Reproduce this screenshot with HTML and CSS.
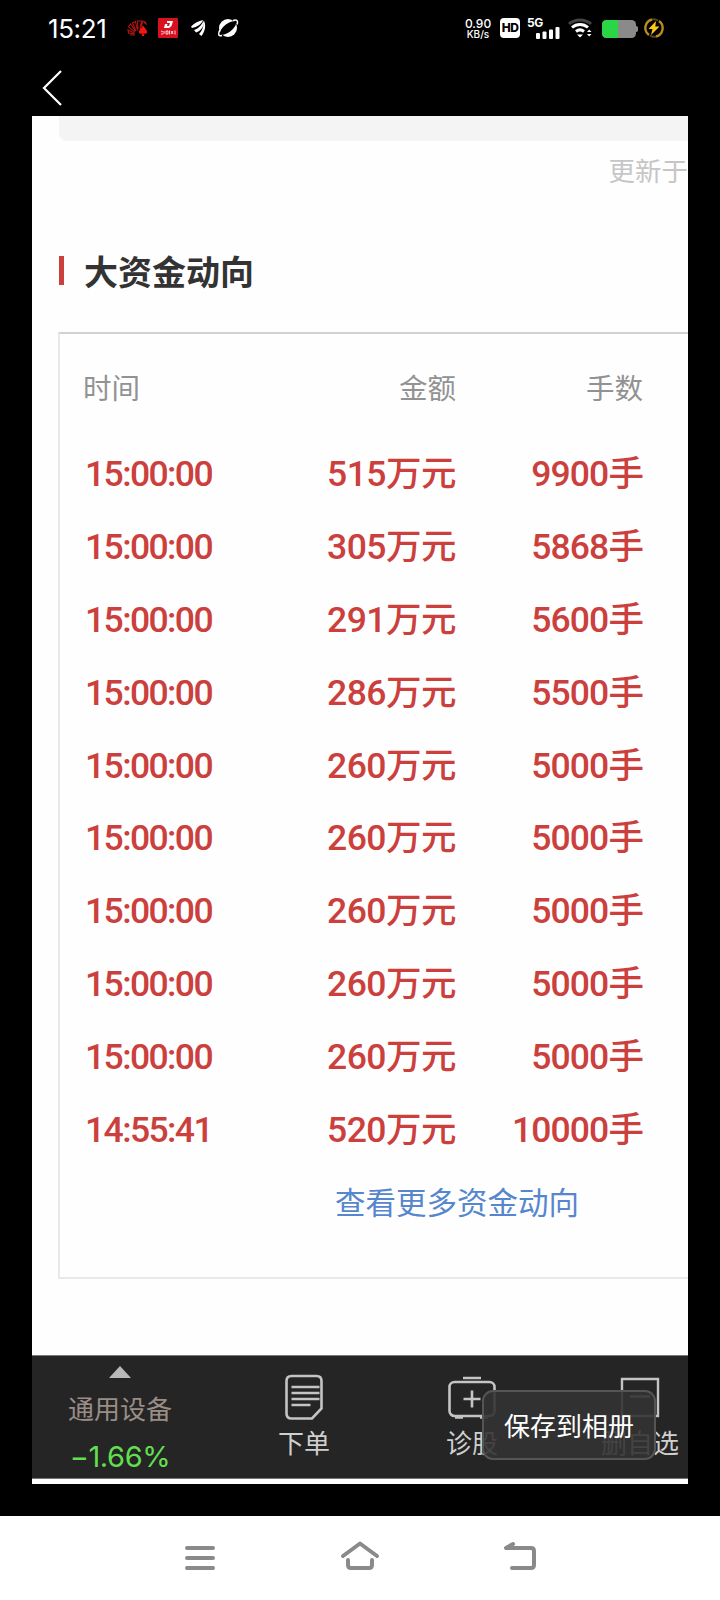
FILE: index.html
```html
<!DOCTYPE html>
<html lang="zh-CN">
  <head>
    <meta charset="UTF-8" />
    <meta name="viewport" content="width=device-width, initial-scale=1.0" />
    <title>大资金动向</title>
    <link rel="stylesheet" href="styles.css" />
  </head>
  <body>
    <div class="screen">
      <!-- 状态栏 -->
      <div class="status-bar">
        <div class="status-left">
          <span class="clock">15:21</span>
          <svg class="app-icons" width="112" height="22" viewBox="0 0 112 22">
            <g fill="none" stroke="#b0160e" stroke-width="1.1">
              <path d="M8 17L1.500 16l-.5-3 6 3M8 15L1.500 10l2-3 5 7M9 14L5.500 6l3-1.500 2 9M11 12l-.5-8h4l-1.500 8M14 10l2-6 3 1.500M17 5.500l3 2" />
              <path d="M3 18h5" />
            </g>
            <path d="M16 8c.5 2.500 4 4 4 7 0 2-2.500 2.500-3.500 1l.8 3h-2.600l.8-3c-1 1.500-3.500 1-3.500-1 0-3 3.500-4.500 4-7z" fill="#f01810" />
            <rect x="31" y="1" width="20" height="20" rx="1" fill="#d9101f" />
            <path d="M40 4h6l-1.500 5L42 11h-5l1-4h2.500l-.5 2h2l1-3h-3z" fill="#fff" />
            <path d="M34 14l2 1M34 17h2M37 14v3M39 14h2v3h-2zM42.500 13.500v4M44 14l2 3M46 14l-2 3M48 13.500v4" stroke="#fff" stroke-width=".8" fill="none" />
            <path d="M64 9.500C67 6 72 4 76 3c-1 4-6 7-11 8zM67 13c4-1 8-5 9.500-9.500C78 8 74 14 69 15.500zM72 17c3-3 5-8 5-13 2 4 1.500 10-2.500 15z" fill="#fff" />
            <circle cx="101" cy="11" r="9" fill="#fff" />
            <ellipse cx="101" cy="11" rx="9.800" ry="4" fill="#000" transform="rotate(-38 101 11)" />
            <path d="M93 13c-2.500 4-1.500 6.500 2 5.500M106 3.500c3.500-1.500 5.500 0 4 4" fill="none" stroke="#fff" stroke-width="1.500" />
          </svg>
        </div>
        <div class="status-right">
          <span class="speed"><b>0.90</b><b>KB/s</b></span>
          <span class="hd">HD</span>
          <span class="signal">
            <b>5G</b>
            <svg width="24" height="12" viewBox="0 0 24 12" fill="#fff">
              <rect x="0" y="6" width="4" height="6" rx="1" />
              <rect x="6.5" y="4.500" width="4" height="7.500" rx="1" />
              <rect x="13" y="2.500" width="4" height="9.500" rx="1" />
              <rect x="19.500" y="0" width="4" height="12" rx="1" />
            </svg>
          </span>
          <svg class="wifi" width="26" height="20" viewBox="0 0 26 20">
            <g fill="none" stroke-width="3">
              <path d="M1 6C7 .5 17 .5 23 6" stroke="#444" />
              <path d="M4 9.500c4.500-4 11.500-4 16 0M8 13.500c2.500-2 5.500-2 8 0" stroke="#fff" />
            </g>
            <path d="M9 16.500h6L12 19.500zM19 14l2.200-2.500L23.500 14zM19 16l2.200 2.500L23.500 16z" fill="#fff" />
          </svg>
          <svg class="battery" width="36" height="18" viewBox="0 0 36 18">
            <rect width="34" height="18" rx="4.500" fill="#8a8a8a" />
            <path d="M4.500 0H16v18H4.500A4.500 4.500 0 0 1 0 13.500v-9A4.500 4.500 0 0 1 4.500 0z" fill="#2ad546" />
            <path d="M34 6c2 0 2 1 2 3s0 3-2 3z" fill="#8a8a8a" />
          </svg>
          <svg class="bolt" width="20" height="20" viewBox="0 0 20 20">
            <path d="M8 1.500A8.700 8.700 0 0 0 5 17M12 18.500A8.700 8.700 0 0 0 15 3" fill="none" stroke="#b98d1d" stroke-width="2.400" />
            <path d="M6 17.500q3 2 6 1M14 2.500q-3-2-6-1" fill="none" stroke="#5c4712" stroke-width="2" />
            <path d="M12 3L4.500 11h4L7 17l8.500-8.500h-4.200z" fill="#ffc61c" />
          </svg>
        </div>
      </div>

      <!-- 返回 -->
      <div class="title-bar">
        <svg width="22" height="38" viewBox="0 0 22 38">
          <path d="M20 2L3 19l17 17" fill="none" stroke="#fff" stroke-width="2.200" />
        </svg>
      </div>

      <div class="photo">
        <div class="gray-box"></div>
        <p class="updated">更新于</p>
        <h2 class="section-title">大资金动向</h2>

        <div class="panel">
          <table class="flow-table">
            <thead>
              <tr><th>时间</th><th>金额</th><th>手数</th></tr>
            </thead>
            <tbody>
              <tr><td>15:00:00</td><td>515万元</td><td>9900手</td></tr>
              <tr><td>15:00:00</td><td>305万元</td><td>5868手</td></tr>
              <tr><td>15:00:00</td><td>291万元</td><td>5600手</td></tr>
              <tr><td>15:00:00</td><td>286万元</td><td>5500手</td></tr>
              <tr><td>15:00:00</td><td>260万元</td><td>5000手</td></tr>
              <tr><td>15:00:00</td><td>260万元</td><td>5000手</td></tr>
              <tr><td>15:00:00</td><td>260万元</td><td>5000手</td></tr>
              <tr><td>15:00:00</td><td>260万元</td><td>5000手</td></tr>
              <tr><td>15:00:00</td><td>260万元</td><td>5000手</td></tr>
              <tr><td>14:55:41</td><td>520万元</td><td>10000手</td></tr>
            </tbody>
          </table>
          <a class="more">查看更多资金动向</a>
        </div>

        <!-- 底部操作栏 -->
        <div class="tab-bar">
          <div class="stock">
            <svg width="22" height="12" viewBox="0 0 22 12"><path d="M11 0l11 12H0z" fill="#b9b9b9" /></svg>
            <span class="stock-name">通用设备</span>
            <span class="stock-rate">−1.66%</span>
          </div>
          <div class="tab">
            <svg width="48" height="46" viewBox="0 0 48 46" fill="none" stroke="#c4c4c4" stroke-width="2.600">
              <path d="M9 1.500h25q5 0 5 5V34l-9.500 10H9q-5 0-5-5V6.500q0-5 5-5z" transform="translate(2.500 .5)" />
              <path d="M11.500 13h28M11.500 19h28M11.500 25h28M11.500 31h19" />
            </svg>
            <span>下单</span>
          </div>
          <div class="tab">
            <svg width="48" height="46" viewBox="0 0 48 46" fill="none" stroke="#c4c4c4" stroke-width="2.600">
              <rect x="1.500" y="8" width="45" height="34" rx="5" />
              <path d="M15 4h18M7 43.500h8M32 43.500h8M24 16.500v17M15.500 25h17" />
            </svg>
            <span>诊股</span>
          </div>
          <div class="tab">
            <svg width="48" height="46" viewBox="0 0 48 46" fill="none" stroke="#c4c4c4" stroke-width="2.400">
              <path d="M6 5h36v37H6zM14 22.500h20" />
            </svg>
            <span>删自选</span>
          </div>
        </div>
        <button class="save-btn">保存到相册</button>
      </div>

      <!-- 系统导航 -->
      <div class="nav-bar">
        <svg width="40" height="32" viewBox="0 0 40 32">
          <path d="M7 8h26M7 18h26M7 28h26" />
        </svg>
        <svg width="40" height="32" viewBox="0 0 40 32">
          <path d="M3 16L20 3.500 37 16M8 20v5q0 3 3 3h18q3 0 3-3v-5" />
        </svg>
        <svg width="40" height="32" viewBox="0 0 40 32">
          <path d="M13 4L6 8h25q3 0 3 3v14q0 3-3 3H12" />
        </svg>
      </div>
    </div>
  </body>
</html>
```
FILE: styles.css
```css
:root {
  --red: #cb403d;
  --bar-color: #252525;
  --cjk: "Noto Sans CJK SC", sans-serif;
}
* {
  margin: 0;
  padding: 0;
  box-sizing: border-box;
}
body {
  background-color: #000;
  font-family: var(--cjk);
}
svg {
  display: block;
  flex-shrink: 0;
}
.screen {
  width: 720px;
  height: 1600px;
  display: flex;
  flex-direction: column;
  overflow: hidden;
}

/* 状态栏 */
.status-bar {
  height: 56px;
  padding: 0 56px 0 48px;
  display: flex;
  justify-content: space-between;
  align-items: center;
  color: #fff;
}
.status-left,
.status-right {
  display: flex;
  align-items: center;
}
.clock {
  width: 79px;
  font: 400 26px/30px Inter, sans-serif;
  letter-spacing: -0.4px;
  padding-top: 2px;
}
.speed {
  width: 26px;
  margin-right: 9px;
  display: flex;
  flex-direction: column;
  align-items: center;
  font: 12px/11px Inter, sans-serif;
}
.speed b {
  font-weight: 500;
}
.speed b:last-child {
  font-size: 10px;
  line-height: 10px;
}
.hd {
  width: 20px;
  height: 20px;
  margin-right: 7px;
  border-radius: 4px;
  background-color: #fff;
  color: #000;
  font: 800 12px/20px Inter, sans-serif;
  letter-spacing: -0.5px;
  text-align: center;
}
.signal {
  width: 33px;
  margin-right: 8px;
  display: flex;
  flex-direction: column;
}
.signal b {
  font: 700 12px/9px Inter, sans-serif;
  letter-spacing: -0.5px;
}
.signal svg {
  align-self: flex-end;
}
.wifi {
  margin-right: 8px;
}
.battery {
  margin: 2px 6px 0 0;
}

.title-bar {
  height: 60px;
  padding: 13px 0 0 41px;
}

/* 内容 */
.photo {
  position: relative;
  width: 656px;
  height: 1368px;
  margin: 0 32px;
  display: flex;
  flex-direction: column;
  background-color: #fefefe;
  overflow: hidden;
}
.gray-box {
  height: 25px;
  margin-left: 27px;
  border-radius: 0 0 0 8px;
  background-color: #f4f4f4;
}
.updated {
  height: 58px;
  color: #c6c6c6;
  font-size: 26.5px;
  line-height: 58px;
  text-align: right;
}
.section-title {
  height: 50px;
  margin: 47px 0 0 26px;
  display: flex;
  align-items: center;
  color: #333;
  font-size: 34px;
  font-weight: 600;
  line-height: 50px;
}
.section-title::before {
  content: "";
  width: 5px;
  height: 29px;
  margin: 0 20px 2px 1px;
  background-color: var(--red);
}
.panel {
  height: 947px;
  margin: 36px 0 0 26px;
  border: solid #e9e9e9;
  border-width: 2px 0 2px 2px;
  border-top-color: #d2d2d2;
}
.flow-table {
  width: 561px;
  margin-left: 22px;
  table-layout: fixed;
  border-collapse: collapse;
}
.flow-table th {
  height: 104px;
  padding: 2px 0 0 1px;
  color: #929292;
  font-size: 28.5px;
  font-weight: 400;
  line-height: 40px;
  text-align: left;
}
.flow-table td {
  height: 72.8px;
  color: var(--red);
  font-family: Roboto, var(--cjk);
  font-size: 35.5px;
  font-weight: 500;
  line-height: 50px;
  letter-spacing: -0.9px;
}
.flow-table td:first-child {
  padding-left: 3px;
  letter-spacing: -1.6px;
}
.flow-table td:nth-child(2) {
  letter-spacing: -0.5px;
}
.flow-table th:nth-child(2) {
  width: 200px;
}
.flow-table th:nth-child(3) {
  width: 187px;
}
.flow-table th:not(:first-child),
.flow-table td:not(:first-child) {
  text-align: right;
}
.more {
  display: block;
  width: 100%;
  padding-left: 275px;
  color: #5686cd;
  font-size: 30.5px;
  line-height: 70px;
}

/* 底部操作栏 */
.tab-bar {
  height: 124px;
  margin-top: 76px;
  display: flex;
  background-color: var(--bar-color);
  border: solid #777;
  border-width: 1px 0;
}
.stock {
  width: 188px;
  padding: 10px 12px 0 0;
  flex-shrink: 0;
  display: flex;
  flex-direction: column;
  align-items: center;
}
.stock-name {
  margin-top: 11px;
  color: #9a8d86;
  font-size: 26px;
  line-height: 38px;
}
.stock-rate {
  margin-top: 13px;
  color: #62df50;
  font: 400 29px/34px Inter, sans-serif;
  letter-spacing: -0.4px;
}
.tab {
  width: 168px;
  padding-top: 18px;
  flex-shrink: 0;
  display: flex;
  flex-direction: column;
  align-items: center;
  color: #cfcfcf;
  font-size: 26px;
  line-height: 38px;
}
.tab span {
  margin-top: 3px;
}
.save-btn {
  position: absolute;
  left: 450px;
  top: 1274px;
  width: 174px;
  height: 70px;
  border: 2px solid #555;
  border-radius: 11px;
  background-color: rgba(51, 51, 51, 0.9);
  color: #fff;
  font-family: var(--cjk);
  font-size: 26px;
  line-height: 38px;
}

/* 系统导航 */
.nav-bar {
  height: 84px;
  margin-top: 32px;
  padding: 0 180px 4px;
  display: flex;
  justify-content: space-between;
  align-items: center;
  background-color: #fff;
}
.nav-bar path {
  fill: none;
  stroke: #8a8a8a;
  stroke-width: 4;
  stroke-linecap: round;
  stroke-linejoin: round;
}
```
